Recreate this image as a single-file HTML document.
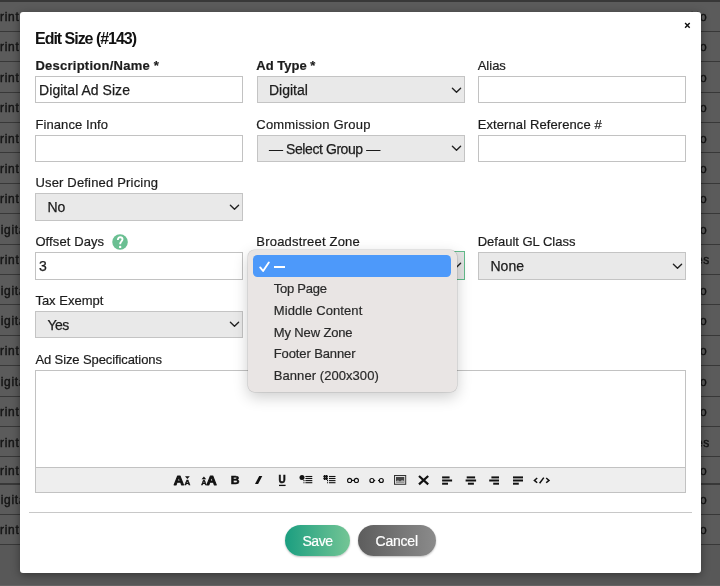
<!DOCTYPE html>
<html><head><meta charset="utf-8">
<style>
*{box-sizing:border-box;margin:0;padding:0}
html,body{width:720px;height:586px;overflow:hidden}
body{background:#5b5b5b;font-family:"Liberation Sans","DejaVu Sans",sans-serif;color:#1a1a1a;position:relative}
.row{position:absolute;left:0;width:720px;height:1.2px;background:#383838}
.bgt{position:absolute;font-size:12px;line-height:14px;letter-spacing:0.7px;color:#141414;white-space:nowrap;-webkit-text-stroke:0.4px #141414}
.bgr{position:absolute;left:688px;font-size:14px;line-height:19px;color:#161616;white-space:nowrap}
#wrap{position:absolute;left:0;top:0;width:720px;height:586px;will-change:transform}
#below{position:absolute;left:0;top:544.6px;width:720px;height:42px;background:#585858}
#strip{position:absolute;left:0;top:584.5px;width:720px;height:2px;background:#636363}
#modal{position:absolute;left:19.6px;top:12.1px;width:681.9px;height:561px;background:#fff;border-radius:3px;box-shadow:0 2px 9px rgba(0,0,0,.4)}
.lbl{position:absolute;font-size:13px;line-height:18px;color:#1c1c1c;white-space:nowrap;-webkit-text-stroke:0.2px #1c1c1c}
.lbl.b{font-weight:bold}
.inp{position:absolute;height:27.3px;border:1px solid #c2c2c2;background:#fff;font-size:14px;line-height:26px;padding:0 0 0 3.1px;letter-spacing:0.04px;-webkit-text-stroke:0.25px #1c1c1c;white-space:nowrap;color:#1c1c1c}
.sel{position:absolute;height:27.3px;border:1px solid #c4c4c4;background:#e9e9e9;font-size:14px;line-height:26px;padding:0.2px 0 0 11.5px;-webkit-text-stroke:0.25px #1c1c1c;white-space:nowrap;color:#1c1c1c}
.sel svg{position:absolute;right:1.7px;top:9.5px}
h1{position:absolute;left:35px;top:28.7px;font-size:16px;line-height:20px;font-weight:bold;letter-spacing:-1.02px;white-space:nowrap;color:#111}
#close{position:absolute;left:684px;top:21.5px}
#help{position:absolute;left:112px;top:233.8px}
#ta{position:absolute;left:35px;top:370px;width:651px;height:98px;border:1px solid #c2c2c2;background:#fff}
#tb{position:absolute;left:35px;top:467px;width:651px;height:25.5px;border:1px solid #c2c2c2;background:#eee}
#hr{position:absolute;left:29px;top:511.6px;width:663px;height:1px;background:#c8c8c8}
.btn{position:absolute;top:525px;height:31px;border-radius:16px;color:#fff;font-size:14px;line-height:32.2px;text-align:center;-webkit-text-stroke:0.2px #fff;box-shadow:0 1px 2px rgba(0,0,0,.25)}
#save{left:285px;width:65px;background:linear-gradient(90deg,#1b9e80,#74c595);letter-spacing:-0.5px}
#cancel{left:357.7px;width:78px;background:linear-gradient(90deg,#5d5d5d,#8b8b8b);letter-spacing:-0.23px}
#dd{position:absolute;left:247.5px;top:249.7px;width:209.3px;height:142px;background:#e9e5e4;border-radius:6.5px;box-shadow:0 0 0 0.5px rgba(0,0,0,.16),0 5px 15px rgba(0,0,0,.2);font-size:13px;color:#2a2a2a}
#dd .hi{position:absolute;left:5.8px;top:5.6px;width:198px;height:21.8px;border-radius:4.5px;background:#4d99fa}
#dd .it{position:absolute;left:26.3px;line-height:16px;white-space:nowrap;-webkit-text-stroke:0.2px #2a2a2a}
#dd svg{position:absolute}
</style></head><body><div id="wrap">
<div class="row" style="top:0;height:1.5px"></div>
<div class="row" style="top:30.70px"></div>
<div class="row" style="top:61.10px"></div>
<div class="row" style="top:91.50px"></div>
<div class="row" style="top:121.90px"></div>
<div class="row" style="top:152.30px"></div>
<div class="row" style="top:182.70px"></div>
<div class="row" style="top:213.10px"></div>
<div class="row" style="top:243.50px"></div>
<div class="row" style="top:273.90px"></div>
<div class="row" style="top:304.30px"></div>
<div class="row" style="top:334.70px"></div>
<div class="row" style="top:365.10px"></div>
<div class="row" style="top:395.50px"></div>
<div class="row" style="top:425.90px"></div>
<div class="row" style="top:456.30px"></div>
<div class="row" style="top:483.40px"></div>
<div class="row" style="top:513.80px"></div>
<div class="row" style="top:544.00px"></div>
<div class="bgt" style="top:10.24px;left:-8.7px">Print</div>
<div class="bgt" style="top:10.24px;left:690.6px">No</div>
<div class="bgt" style="top:40.34px;left:-8.7px">Print</div>
<div class="bgt" style="top:40.34px;left:690.6px">No</div>
<div class="bgt" style="top:70.74px;left:-8.7px">Print</div>
<div class="bgt" style="top:70.74px;left:690.6px">No</div>
<div class="bgt" style="top:101.14px;left:-8.7px">Print</div>
<div class="bgt" style="top:101.14px;left:690.6px">No</div>
<div class="bgt" style="top:131.54px;left:-8.7px">Print</div>
<div class="bgt" style="top:131.54px;left:690.6px">No</div>
<div class="bgt" style="top:161.94px;left:-8.7px">Print</div>
<div class="bgt" style="top:161.94px;left:690.6px">No</div>
<div class="bgt" style="top:192.34px;left:-8.7px">Print</div>
<div class="bgt" style="top:192.34px;left:690.6px">No</div>
<div class="bgt" style="top:222.74px;left:-8.73px">Digital</div>
<div class="bgt" style="top:222.74px;left:690.6px">No</div>
<div class="bgt" style="top:253.14px;left:-8.7px">Print</div>
<div class="bgt" style="top:253.14px;left:688.4px">Yes</div>
<div class="bgt" style="top:283.54px;left:-8.73px">Digital</div>
<div class="bgt" style="top:283.54px;left:690.6px">No</div>
<div class="bgt" style="top:313.94px;left:-8.73px">Digital</div>
<div class="bgt" style="top:313.94px;left:690.6px">No</div>
<div class="bgt" style="top:344.34px;left:-8.7px">Print</div>
<div class="bgt" style="top:344.34px;left:690.6px">No</div>
<div class="bgt" style="top:374.74px;left:-8.73px">Digital</div>
<div class="bgt" style="top:374.74px;left:690.6px">No</div>
<div class="bgt" style="top:405.14px;left:-8.7px">Print</div>
<div class="bgt" style="top:405.14px;left:690.6px">No</div>
<div class="bgt" style="top:435.54px;left:-8.7px">Print</div>
<div class="bgt" style="top:435.54px;left:688.4px">Yes</div>
<div class="bgt" style="top:464.29px;left:-8.7px">Print</div>
<div class="bgt" style="top:464.29px;left:690.6px">No</div>
<div class="bgt" style="top:493.04px;left:-8.73px">Digital</div>
<div class="bgt" style="top:493.04px;left:690.6px">No</div>
<div class="bgt" style="top:523.34px;left:-8.7px">Print</div>
<div class="bgt" style="top:523.34px;left:690.6px">No</div>
<div id="below"></div><div id="strip"></div>
<div id="modal"></div>
<h1>Edit Size (#143)</h1>
<svg id="close" width="7" height="7" viewBox="0 0 7 7"><path d="M1.1 1.1 L5.7 5.7 M5.7 1.1 L1.1 5.7" stroke="#111" stroke-width="1.45" fill="none"/></svg>
<div class="lbl b" style="left:35.4px;top:57.2px;letter-spacing:0.25px">Description/Name *</div>
<div class="inp" style="left:35px;top:76px;width:208px">Digital Ad Size</div>
<div class="lbl b" style="left:256.3px;top:57.2px;">Ad Type *</div>
<div class="sel" style="left:256.5px;top:76px;width:208px;">Digital<svg width="11" height="7" viewBox="0 0 11 7"><path d="M1.4 1.2 L5.5 5.3 L9.6 1.2" fill="none" stroke="#222" stroke-width="1.35" stroke-linecap="round" stroke-linejoin="round"/></svg></div>
<div class="lbl" style="left:477.7px;top:57.2px;">Alias</div>
<div class="inp" style="left:478px;top:76px;width:208px"></div>
<div class="lbl" style="left:35.4px;top:115.8px;letter-spacing:0.1px">Finance Info</div>
<div class="inp" style="left:35px;top:134.6px;width:208px"></div>
<div class="lbl" style="left:256.3px;top:115.8px;letter-spacing:0.19px">Commission Group</div>
<div class="sel" style="left:256.5px;top:134.6px;width:208px;letter-spacing:-0.42px">— Select Group —<svg width="11" height="7" viewBox="0 0 11 7"><path d="M1.4 1.2 L5.5 5.3 L9.6 1.2" fill="none" stroke="#222" stroke-width="1.35" stroke-linecap="round" stroke-linejoin="round"/></svg></div>
<div class="lbl" style="left:477.7px;top:115.8px;letter-spacing:0.1px">External Reference #</div>
<div class="inp" style="left:478px;top:134.6px;width:208px"></div>
<div class="lbl" style="left:35.4px;top:174.1px;letter-spacing:0.18px">User Defined Pricing</div>
<div class="sel" style="left:35px;top:193.3px;width:208px;">No<svg width="11" height="7" viewBox="0 0 11 7"><path d="M1.4 1.2 L5.5 5.3 L9.6 1.2" fill="none" stroke="#222" stroke-width="1.35" stroke-linecap="round" stroke-linejoin="round"/></svg></div>
<div class="lbl" style="left:35.4px;top:232.7px;letter-spacing:0.1px">Offset Days</div>
<div class="inp" style="left:35px;top:252.3px;width:208px">3</div>
<div class="lbl" style="left:256.3px;top:232.7px;letter-spacing:0.2px">Broadstreet Zone</div>
<div class="sel" style="left:256.5px;top:252.3px;width:208px;border:1.5px solid #62bb8a;background:#e4e4e4;top:251.4px;height:28.3px"><svg width="11" height="7" viewBox="0 0 11 7"><path d="M1.4 1.2 L5.5 5.3 L9.6 1.2" fill="none" stroke="#222" stroke-width="1.35" stroke-linecap="round" stroke-linejoin="round"/></svg></div>
<div class="lbl" style="left:477.7px;top:232.7px;">Default GL Class</div>
<div class="sel" style="left:478px;top:252.3px;width:208px;">None<svg width="11" height="7" viewBox="0 0 11 7"><path d="M1.4 1.2 L5.5 5.3 L9.6 1.2" fill="none" stroke="#222" stroke-width="1.35" stroke-linecap="round" stroke-linejoin="round"/></svg></div>
<div class="lbl" style="left:35.4px;top:291.7px;">Tax Exempt</div>
<div class="sel" style="left:35px;top:310.7px;width:208px;letter-spacing:-0.6px">Yes<svg width="11" height="7" viewBox="0 0 11 7"><path d="M1.4 1.2 L5.5 5.3 L9.6 1.2" fill="none" stroke="#222" stroke-width="1.35" stroke-linecap="round" stroke-linejoin="round"/></svg></div>
<svg id="help" width="16" height="16" viewBox="112 233.8 16 16"><circle cx="120.05" cy="241.75" r="7.8" fill="#6abf92"/><path d="M117.9 239.8 C117.8 237.7 119 237.1 120.2 237.1 C121.6 237.1 122.5 237.9 122.5 239.1 C122.5 240.2 121.9 240.8 121.2 241.5 C120.5 242.1 120.15 242.7 120.15 244.1" fill="none" stroke="#fff" stroke-width="1.9"/><circle cx="120.15" cy="246.7" r="1.2" fill="#fff"/></svg>
<div class="lbl" style="left:35.4px;top:350.6px;letter-spacing:-0.1px">Ad Size Specifications</div>
<div id="ta"></div>
<div id="tb"></div>
<svg id="tbi" style="position:absolute;left:160px;top:468px" width="400" height="25" viewBox="0 0 400 25" font-family="Liberation Sans, sans-serif" fill="#111"><text x="13.8" y="16.7" font-size="12" font-weight="bold" textLength="10.2" lengthAdjust="spacingAndGlyphs" stroke="#111" stroke-width="0.9" stroke-linejoin="round">A</text><text x="24.4" y="16.7" font-size="6.5" font-weight="bold" textLength="5.8" lengthAdjust="spacingAndGlyphs" stroke="#111" stroke-width="0.4">A</text><path d="M25 8.3 h4.8 l-2.4 2.6z" fill="#111"/><text x="41.2" y="16.7" font-size="6.5" font-weight="bold" textLength="5.4" lengthAdjust="spacingAndGlyphs" stroke="#111" stroke-width="0.4">A</text><path d="M41.6 11.2 h4.6 l-2.3 -2.7z" fill="#111"/><text x="46.4" y="16.7" font-size="12" font-weight="bold" textLength="10.2" lengthAdjust="spacingAndGlyphs" stroke="#111" stroke-width="0.9" stroke-linejoin="round">A</text><text x="70.8" y="16" font-size="10" font-weight="bold" textLength="8.8" lengthAdjust="spacingAndGlyphs" stroke="#111" stroke-width="0.5">B</text><path d="M99.2 7.9 h3.1 l-4.2 8 h-3.1z" fill="#111"/><text x="118.6" y="15.2" font-size="10" font-weight="bold" textLength="7.2" lengthAdjust="spacingAndGlyphs" stroke="#111" stroke-width="0.5">U</text><path d="M119 17.4 H125.6" stroke="#111" stroke-width="1.3"/><circle cx="142" cy="9.4" r="2.5" fill="#111"/><path d="M145.4 8.5 H152.3" stroke="#111" stroke-width="1.1"/><path d="M145.4 10.5 H152.3" stroke="#111" stroke-width="1.1"/><path d="M145.4 12.6 H152.3" stroke="#111" stroke-width="1.1"/><path d="M143.4 12.6 H144.5" stroke="#111" stroke-width="1.1"/><path d="M145.4 14.7 H152.3" stroke="#111" stroke-width="1.1"/><path d="M143.4 14.7 H144.5" stroke="#111" stroke-width="1.1"/><path d="M163.3 8.5 h4.6 M163.3 10.6 h4.6 M164.7 7 v5 M166.6 7 v5" stroke="#111" stroke-width="1.4" fill="none"/><path d="M169 8.5 H175.5" stroke="#111" stroke-width="1.1"/><path d="M169 10.5 H175.5" stroke="#111" stroke-width="1.1"/><path d="M169 12.6 H175.5" stroke="#111" stroke-width="1.1"/><path d="M167 12.6 H168.1" stroke="#111" stroke-width="1.1"/><path d="M169 14.7 H175.5" stroke="#111" stroke-width="1.1"/><path d="M167 14.7 H168.1" stroke="#111" stroke-width="1.1"/><circle cx="189.6" cy="12.4" r="2.05" fill="none" stroke="#111" stroke-width="1.1"/><circle cx="196.4" cy="12.4" r="2.05" fill="none" stroke="#111" stroke-width="1.1"/><path d="M191.5 12.4 H194.5" stroke="#111" stroke-width="1.1"/><circle cx="211.9" cy="12.5" r="2" fill="none" stroke="#111" stroke-width="1.2"/><circle cx="221.3" cy="12.5" r="2" fill="none" stroke="#111" stroke-width="1.2"/><path d="M213.9 12.5 H215.2" stroke="#111" stroke-width="1.1"/><path d="M218 12.5 H219.3" stroke="#111" stroke-width="1.1"/><rect x="234.5" y="7.5" width="11.2" height="8.8" fill="#ddd" stroke="#333" stroke-width="1"/><rect x="236" y="9" width="8.2" height="5.8" fill="#444"/><path d="M236 14.8 v-1.5 l2-1 l2 1.2 l2-1.4 l2.2 1 v1.7z" fill="#aaa"/><path d="M259 8 L268.2 16.4 M268.2 8 L259 16.4" stroke="#111" stroke-width="2.2" fill="none"/><path d="M282.1 9.4 H289.6" stroke="#111" stroke-width="2.0"/><path d="M282.1 12.5 H292.1" stroke="#111" stroke-width="2.0"/><path d="M282.1 15.7 H288" stroke="#111" stroke-width="2.0"/><path d="M306.7 9.4 H315.1" stroke="#111" stroke-width="2.0"/><path d="M305.6 12.5 H316.1" stroke="#111" stroke-width="2.0"/><path d="M307.9 15.7 H313.9" stroke="#111" stroke-width="2.0"/><path d="M331.4 9.4 H339" stroke="#111" stroke-width="2.0"/><path d="M329.2 12.5 H339" stroke="#111" stroke-width="2.0"/><path d="M333.2 15.7 H339" stroke="#111" stroke-width="2.0"/><path d="M353 9.4 H363" stroke="#111" stroke-width="2.0"/><path d="M353 12.5 H363" stroke="#111" stroke-width="2.0"/><path d="M353 15.7 H358.8" stroke="#111" stroke-width="2.0"/><path d="M377.2 10 L374.4 12.4 L377.2 14.8 M386.2 10 L389 12.4 L386.2 14.8 M383.8 9.6 L379.6 15.2" stroke="#111" stroke-width="1.5" fill="none"/></svg>
<div id="hr"></div>
<div class="btn" id="save">Save</div>
<div class="btn" id="cancel">Cancel</div>
<div id="dd">
<div class="hi"></div>
<svg style="left:11px;top:11.5px" width="12" height="12" viewBox="0 0 12 12"><path d="M1.2 6.4 L4.1 10 L9.8 1.5" fill="none" stroke="#fff" stroke-width="1.9" stroke-linecap="round" stroke-linejoin="round"/></svg>
<div style="position:absolute;left:26.6px;top:16.7px;width:10.6px;height:1.5px;background:#fff"></div><div class="it" style="top:9px;color:transparent;-webkit-text-stroke:0">—</div>
<div class="it" style="top:31.2px;letter-spacing:-0.25px">Top Page</div>
<div class="it" style="top:53px;letter-spacing:0.08px">Middle Content</div>
<div class="it" style="top:74.9px;letter-spacing:-0.14px">My New Zone</div>
<div class="it" style="top:96.7px;letter-spacing:-0.12px">Footer Banner</div>
<div class="it" style="top:118.5px;letter-spacing:0.06px">Banner (200x300)</div>
</div>
</div></body></html>
